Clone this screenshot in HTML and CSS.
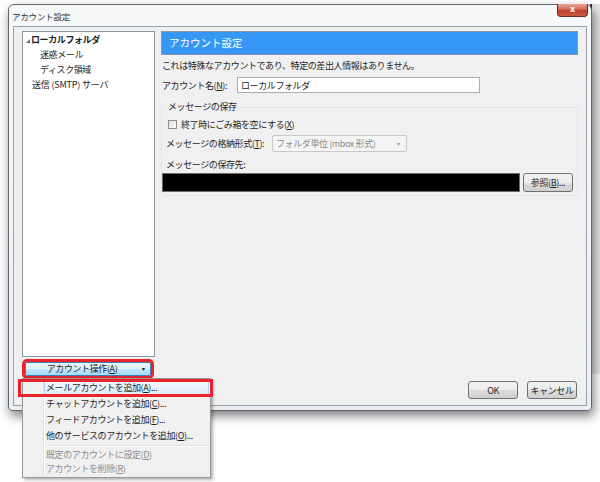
FILE: index.html
```html
<!DOCTYPE html>
<html lang="ja">
  <head>
    <meta charset="UTF-8" />
    <title>アカウント設定</title>
    <link rel="stylesheet" href="styles.css">
  </head>
  <body>
    <div class="desk">
      <div class="behind"></div>

      <div class="window">
        <div class="titlebar">
          <span class="title">アカウント設定</span>
          <span class="close">x</span>
        </div>

        <div class="client">
          <div class="sidebar">
            <ul class="tree">
              <li class="folder"><span class="twisty"></span>ローカルフォルダ</li>
              <li class="child">迷惑メール</li>
              <li class="child">ディスク領域</li>
              <li class="smtp">送信 (SMTP) サーバ</li>
            </ul>
            <button class="actions">アカウント操作(<u>A</u>)<span class="caret">▾</span></button>
          </div>

          <div class="pane">
            <h1 class="pane-head">アカウント設定</h1>
            <p class="note">これは特殊なアカウントであり、特定の差出人情報はありません。</p>

            <div class="name-row">
              <label class="name-label">アカウント名(<u>N</u>):</label>
              <input class="field" type="text" value="ローカルフォルダ" />
            </div>

            <fieldset class="group">
              <legend>メッセージの保存</legend>
              <label class="check"><span class="box"></span>終了時にごみ箱を空にする(<u>X</u>)</label>
              <div class="format-row">
                <label class="format-label">メッセージの格納形式(<u>T</u>):</label>
                <div class="select">フォルダ単位 (mbox 形式)<span class="caret">▾</span></div>
              </div>
              <div class="store-label">メッセージの保存先:</div>
              <div class="path-row">
                <div class="path"></div>
                <button class="btn browse">参照(<u>B</u>)...</button>
              </div>
            </fieldset>

            <div class="footer">
              <button class="btn">OK</button>
              <button class="btn">キャンセル</button>
            </div>
          </div>
        </div>
      </div>

      <ul class="menu">
        <li class="hot">メールアカウントを追加(<u>A</u>)...</li>
        <li>チャットアカウントを追加(<u>C</u>)...</li>
        <li>フィードアカウントを追加(<u>F</u>)...</li>
        <li>他のサービスのアカウントを追加(<u>O</u>)...</li>
        <li class="sep"></li>
        <li class="dim">既定のアカウントに設定(<u>D</u>)</li>
        <li class="dim">アカウントを削除(<u>R</u>)</li>
      </ul>
    </div>
  </body>
</html>
```

FILE: styles.css
```css
* {
  box-sizing: border-box;
}
body {
  margin: 0;
  background: #fff;
  font-family: "Noto Sans CJK JP", "Noto Sans", sans-serif;
  font-size: 9px;
  letter-spacing: -0.4px;
  color: #1e1e1e;
}
u {
  text-decoration: underline;
  text-underline-offset: 1px;
}
.desk {
  position: relative;
  width: 600px;
  height: 482px;
  overflow: hidden;
}

/* window peeking out on the right */
.behind {
  position: absolute;
  left: 590px;
  top: 4px;
  width: 10px;
  height: 370px;
  background: #e4e6e8;
  border-left: 2px solid #2e2e2e;
}

/* dialog frame */
.window {
  position: absolute;
  left: 8px;
  top: 4px;
  width: 584px;
  height: 407px;
  display: flex;
  flex-direction: column;
  border: 1px solid #5f6770;
  border-radius: 6px 6px 4px 4px;
  background: linear-gradient(#f7f8fa, #eceff2);
  box-shadow: 2px 5px 11px rgba(0, 0, 0, 0.5);
}
.titlebar {
  position: relative;
  height: 21px;
  display: flex;
  align-items: center;
  padding-left: 3px;
}
.title {
  font-size: 8.5px;
  letter-spacing: -0.2px;
  color: #333;
}
.close {
  position: absolute;
  right: 3px;
  top: -1px;
  width: 31px;
  height: 13px;
  border: 1px solid #6b2a22;
  border-top: none;
  border-radius: 0 0 4px 4px;
  background: linear-gradient(#e9a595, #d0604e 50%, #c0402d 51%, #c65a40);
  color: #fff;
  font-family: "DejaVu Sans", sans-serif;
  font-size: 8px;
  font-weight: bold;
  line-height: 11px;
  text-align: center;
}
.client {
  flex: 1;
  display: flex;
  gap: 6px;
  margin: 0 4px 4px;
  padding: 4px 8px 5px;
  border: 1px solid #9aa4ae;
  background: #f0f0f0;
}

/* account tree */
.sidebar {
  width: 133px;
  display: flex;
  flex-direction: column;
}
.tree {
  height: 326px;
  margin: 0;
  padding: 0;
  list-style: none;
  background: #fff;
  border: 1px solid #8e939b;
}
.tree li {
  height: 15px;
  line-height: 15px;
  white-space: pre;
}
.folder {
  padding-left: 3px;
  font-weight: bold;
  display: flex;
  align-items: center;
}
.twisty {
  width: 0;
  height: 0;
  margin: 2px 1px 0 0;
  border-left: 4px solid transparent;
  border-bottom: 4px solid #6a6a6a;
}
.child {
  padding-left: 17px;
}
.smtp {
  padding-left: 9px;
  letter-spacing: -0.2px;
}
.actions {
  position: relative;
  width: 126px;
  height: 14px;
  margin: 5px 0 0 3px;
  padding: 0 12px 0 0;
  border: 1px solid #3c7fb1;
  border-radius: 2px;
  background: linear-gradient(#eaf6fd, #d9f0fc 50%, #bee6fd 51%, #a7d9f5);
  font: inherit;
  letter-spacing: inherit;
  line-height: 12px;
  color: #1e1e1e;
  outline: 3px solid #e8232c;
}
.actions .caret {
  position: absolute;
  right: 5px;
  top: 0;
  font-size: 6px;
}

/* settings pane */
.pane {
  flex: 1;
  display: flex;
  flex-direction: column;
  padding-bottom: 1px;
}
.pane-head {
  margin: 0;
  height: 24px;
  padding-left: 7px;
  border: 1px solid #8597a8;
  background: #3797f5;
  color: #fff;
  font-size: 10.5px;
  font-weight: normal;
  line-height: 22px;
  letter-spacing: 0;
}
.note {
  margin: 5px 0 0 1px;
  line-height: 12px;
}
.name-row {
  display: flex;
  align-items: center;
  margin-top: 5px;
  padding-left: 1px;
}
.name-label {
  width: 75px;
}
.field {
  width: 243px;
  height: 16px;
  padding: 0 3px;
  border: 1px solid #abadb3;
  font: inherit;
  letter-spacing: inherit;
  color: #1e1e1e;
}
.group {
  margin: 8px 0 0;
  padding: 0 0 3px;
  border: 1px solid #e2e5e8;
  border-radius: 3px;
}
.group legend {
  margin-left: 4px;
  padding: 0 2px;
  line-height: 12px;
}
.check {
  display: flex;
  align-items: center;
  height: 15px;
  margin-top: 4px;
  padding-left: 6px;
}
.box {
  width: 9px;
  height: 9px;
  margin-right: 4px;
  border: 1px solid #8f8f8f;
  background: linear-gradient(135deg, #e2e2e2, #fbfbfb);
}
.format-row {
  display: flex;
  align-items: center;
  margin-top: 3px;
  padding-left: 4px;
}
.format-label {
  width: 106px;
}
.select {
  position: relative;
  width: 135px;
  height: 17px;
  padding-left: 3px;
  border: 1px solid #c8c8c8;
  border-radius: 2px;
  background: #f4f4f4;
  color: #8a8a8a;
  line-height: 15px;
  white-space: pre;
}
.select .caret {
  position: absolute;
  right: 6px;
  top: 0;
  font-size: 6px;
  color: #9a9a9a;
}
.store-label {
  margin-top: 7px;
  padding-left: 4px;
  line-height: 12px;
}
.path-row {
  display: flex;
  margin-top: 2px;
}
.path {
  width: 358px;
  height: 19px;
  border: 1px solid #6d6d6d;
  background: #000;
}
.btn {
  width: 50px;
  height: 18px;
  padding: 0;
  border: 1px solid #707070;
  border-radius: 3px;
  background: linear-gradient(#f2f2f2, #ebebeb 50%, #dddddd 51%, #cfcfcf);
  font: inherit;
  letter-spacing: inherit;
  color: #1e1e1e;
}
.browse {
  height: 19px;
  margin-left: 3px;
}
.footer {
  margin-top: auto;
  display: flex;
  justify-content: flex-end;
  gap: 9px;
  padding-right: 1px;
}

/* popup opened from the account actions button */
.menu {
  position: absolute;
  left: 22px;
  top: 378px;
  width: 189px;
  height: 100px;
  margin: 0;
  padding: 1px;
  list-style: none;
  border: 1px solid #979797;
  background: #f0f0f0 linear-gradient(to right, transparent 20px, #e2e3e3 20px, #e2e3e3 21px, #fff 21px, #fff 22px, transparent 22px);
  box-shadow: 2px 2px 3px rgba(0, 0, 0, 0.3);
}
.menu li {
  position: relative;
  height: 16px;
  padding-left: 22px;
  line-height: 16px;
  white-space: nowrap;
}
.menu .hot::before {
  content: "";
  position: absolute;
  left: 20px;
  right: 0;
  top: 0;
  bottom: 1px;
  border: 1px solid #aecff7;
  border-radius: 2px;
  background: linear-gradient(#f3f8fe, #e1edfb);
  z-index: -1;
}
.menu .hot::after {
  content: "";
  position: absolute;
  left: -6px;
  right: -4px;
  top: -1px;
  bottom: -1px;
  border: 3px solid #e8232c;
}
.menu .hot {
  z-index: 0;
}
.menu .sep {
  height: 4px;
}
.menu .sep::before {
  content: "";
  position: absolute;
  left: 22px;
  right: 1px;
  top: 1px;
  border-top: 1px solid #e0e0e0;
  border-bottom: 1px solid #fff;
}
.menu .dim {
  height: 14px;
  line-height: 14px;
  color: #8d8d8d;
}
```
